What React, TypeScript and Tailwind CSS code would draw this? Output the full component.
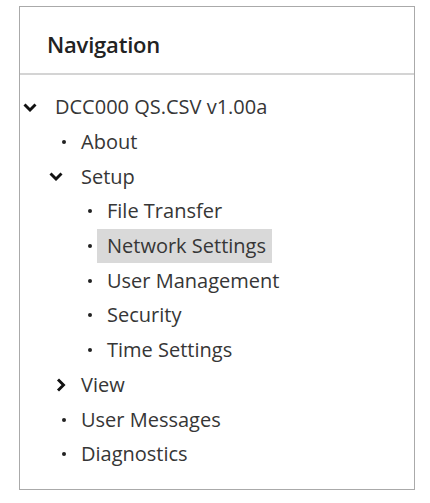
import type { ReactNode } from 'react'

type Item = { label: string; level: number; marker: 'down' | 'right' | 'dot'; active?: boolean }

const ITEMS: Item[] = [
  { label: 'DCC000 QS.CSV v1.00a', level: 0, marker: 'down' },
  { label: 'About', level: 1, marker: 'dot' },
  { label: 'Setup', level: 1, marker: 'down' },
  { label: 'File Transfer', level: 2, marker: 'dot' },
  { label: 'Network Settings', level: 2, marker: 'dot', active: true },
  { label: 'User Management', level: 2, marker: 'dot' },
  { label: 'Security', level: 2, marker: 'dot' },
  { label: 'Time Settings', level: 2, marker: 'dot' },
  { label: 'View', level: 1, marker: 'right' },
  { label: 'User Messages', level: 1, marker: 'dot' },
  { label: 'Diagnostics', level: 1, marker: 'dot' },
]

const indent = ['pl-0', 'pl-[26px]', 'pl-[52px]']

function Marker({ kind }: { kind: Item['marker'] }) {
  let icon: ReactNode
  if (kind === 'down') {
    icon = (
      <svg width="14" height="9" viewBox="0 0 14 9" className="ml-[2px]">
        <path d="M1.5 1.5 L7 7 L12.5 1.5" fill="none" stroke="#111" strokeWidth="2.9" />
      </svg>
    )
  } else if (kind === 'right') {
    icon = (
      <svg width="10" height="14" viewBox="0 0 10 14" className="ml-[9px]">
        <path d="M2 1.5 L7.5 7 L2 12.5" fill="none" stroke="#111" strokeWidth="2.9" />
      </svg>
    )
  } else {
    icon = <span className="ml-[15px] block h-[4px] w-[4px] rounded-full bg-[#222]" />
  }
  return <span className="flex w-[34px] shrink-0 items-center">{icon}</span>
}

export default function App() {
  return (
    <div className="min-h-[503px] bg-white pl-[19px] pt-[6px] font-['Open_Sans',sans-serif] text-[#363636]">
      <div className="h-[484px] w-[396px] border border-[#aaa] bg-white">
        <div className="flex h-[68px] items-center border-b-2 border-[#d4d4d4] pl-[27px] pt-[9px]">
          <h2 className="text-[22px] font-semibold tracking-[-0.2px] text-[#222]">Navigation</h2>
        </div>
        <ul className="pt-[15px] pl-[1px]">
          {ITEMS.map((it) => (
            <li key={it.label} className={`flex h-[34.7px] items-center ${indent[it.level]}`}>
              <Marker kind={it.marker} />
              <span
                className={
                  it.active
                    ? '-ml-[10px] flex h-[34px] items-center bg-[#d9d9d9] pl-[10px] pr-[6px] text-[20px]'
                    : 'text-[20px]'
                }
              >
                {it.label}
              </span>
            </li>
          ))}
        </ul>
      </div>
    </div>
  )
}
